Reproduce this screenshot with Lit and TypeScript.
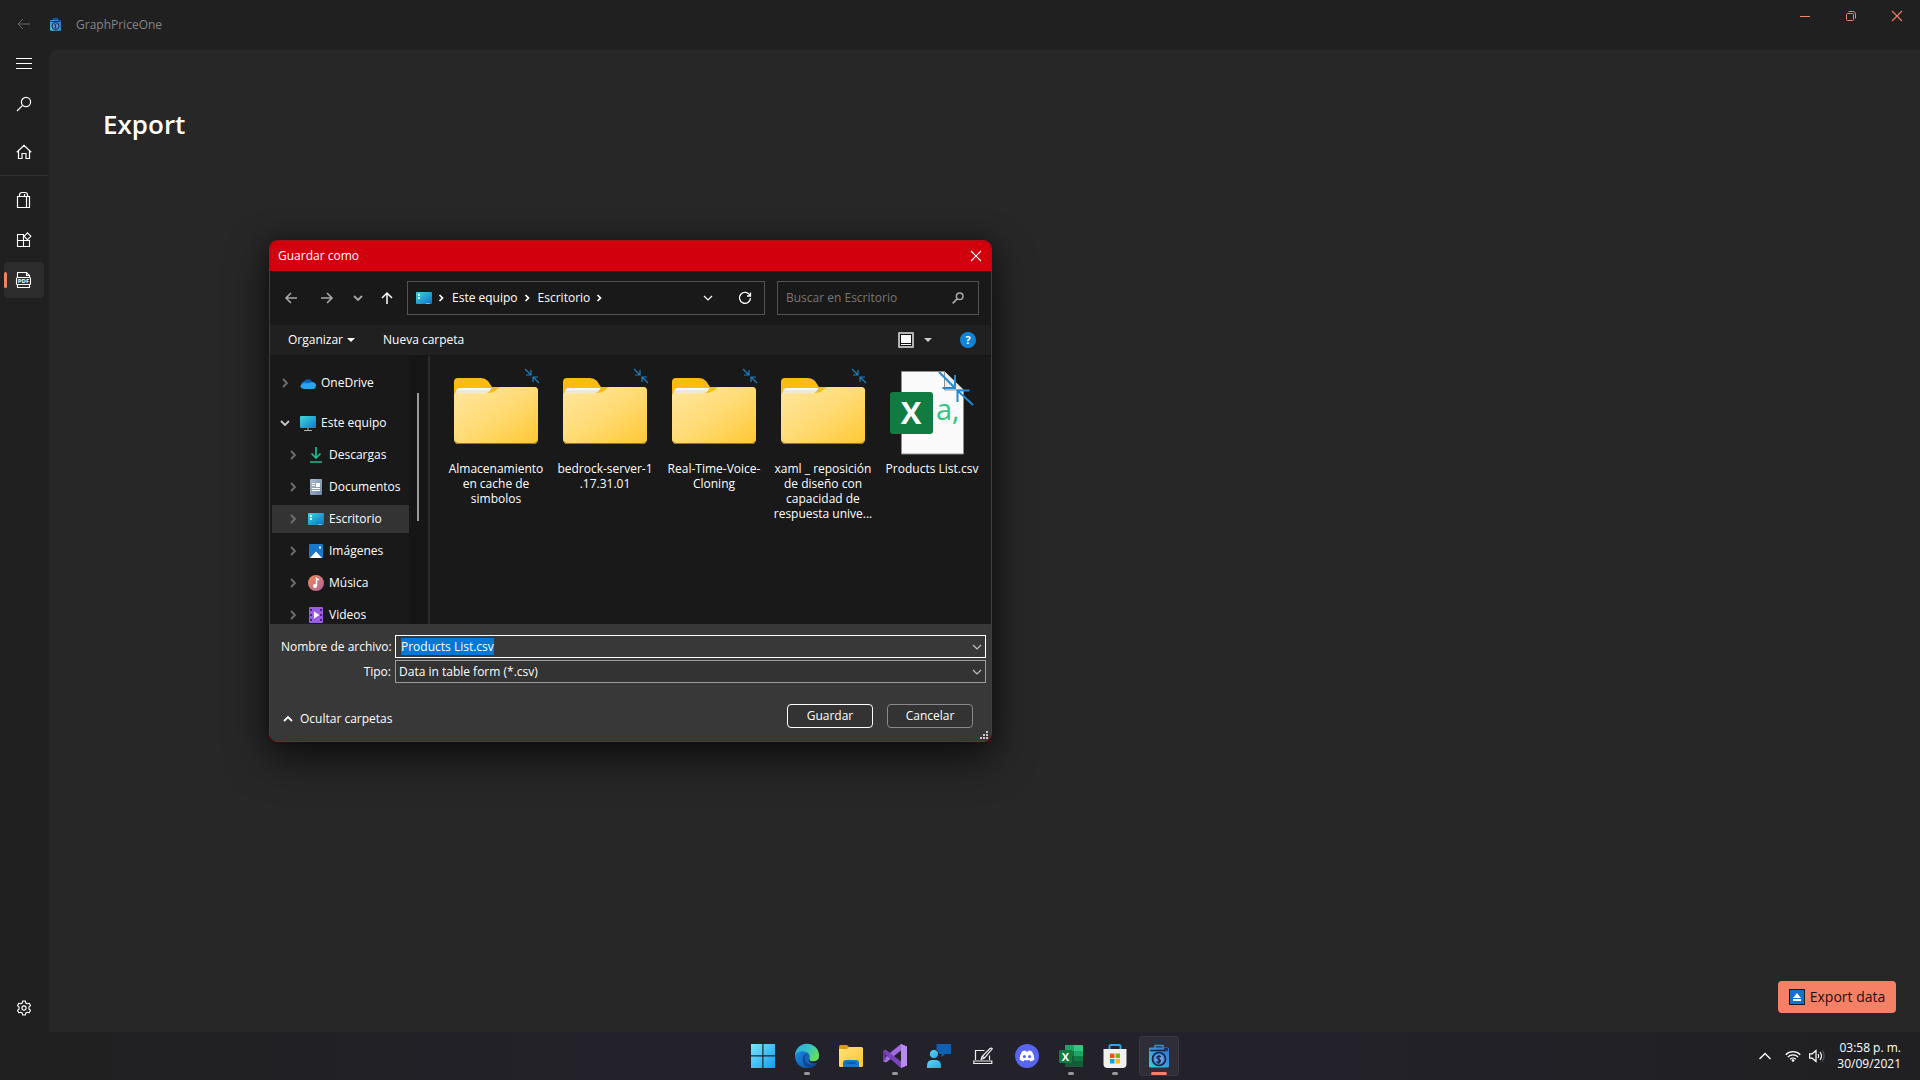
import { LitElement, html, css, svg, nothing, TemplateResult, SVGTemplateResult } from "lit";
import { customElement, state, query } from "lit/decorators.js";
import { classMap } from "lit/directives/class-map.js";

const icon = (w: number, h: number, body: SVGTemplateResult, cls = "") =>
  html`<svg class=${"glyph " + cls} width=${w} height=${h} viewBox="0 0 ${w} ${h}" aria-hidden="true">${body}</svg>`;

const chevron = {
  right: () => icon(6, 10, svg`<path d="M1 1l4 4-4 4" stroke-width="1.800"/>`),
  crumb: () => icon(6, 10, svg`<path d="M1.500 2l3 3-3 3" stroke-width="1.700"/>`),
  down: () => icon(10, 6, svg`<path d="M1 1l4 4 4-4" stroke-width="1.800"/>`),
  thinDown: () => icon(10, 6, svg`<path d="M1 1l4 4 4-4" stroke-width="1.200"/>`),
  up: () => icon(10, 6, svg`<path d="M1 5l4-4 4 4" stroke-width="1.800"/>`),
  trayUp: () => icon(14, 8, svg`<path d="M1.500 7L7 1.500 12.500 7" stroke-width="1.400"/>`),
};
const caret = () => icon(8, 4, svg`<path class="solid" d="M0 0h8L4 4z"/>`);

const glyphs = {
  back: () => icon(14, 12, svg`<path d="M6 1L1 6l5 5M1 6h12" stroke-width="1"/>`),
  menu: () => icon(16, 12, svg`<path d="M0 1.500h16M0 6.500h16M0 11.500h16" stroke-width="1"/>`),
  search: () => icon(16, 16, svg`<circle cx="10" cy="6" r="4.600" stroke-width="1.200"/><path d="M6.600 9.400L1 15" stroke-width="1.200"/>`),
  home: () => icon(16, 16, svg`<path d="M.800 8.300L8 1.300l7.200 7M2.500 7v7.500h3.500V9.500h4v5h3.500V7" stroke-width="1.200"/>`),
  bag: () => icon(16, 18, svg`<path d="M1.500 5.500h12v11h-12zM10.500 5.500v11M3.500 5.500V4q0-2.500 2.500-2.500h3q2.500 0 2.500 2.500v1.500M8.500 5.500V3" stroke-width="1.200"/>`),
  apps: () => icon(16, 16, svg`<path d="M8 2.500H1.500v12h12V8M1.500 8.500h12M7.500 2.500v12M11.500.900l3.400 3.400-3.400 3.400L8.100 4.300z" stroke-width="1.100"/>`),
  pdf: () => icon(16, 18, svg`<path d="M1.500 6V1.500h9l3 3V6M10.500 1.500v3h3M1.500 13v3.500h12V13" stroke-width="1.100"/><rect x=".500" y="6.500" width="14" height="7" rx="1" stroke-width="1.100"/><text class="pdf-text" x="7.500" y="12" text-anchor="middle">PDF</text>`),
  gear: () => icon(16, 16, svg`<circle cx="8" cy="8" r="2.100" stroke-width="1.100"/><path d="M6.700 1h2.600l.500 2 1.400.800 2-.600 1.300 2.300-1.500 1.400v2.200l1.500 1.400-1.300 2.300-2-.600-1.400.800-.500 2H6.700l-.500-2-1.400-.800-2 .600-1.300-2.300L3 9.100V6.900L1.500 5.500l1.300-2.300 2 .600L6.200 3z" stroke-width="1.100" stroke-linejoin="round"/>`),
  minimize: () => icon(10, 10, svg`<path d="M0 5.500h10" shape-rendering="crispEdges"/>`),
  restore: () => icon(10, 10, svg`<rect x=".500" y="2.500" width="7" height="7" rx="1"/><path d="M2.500.500H7q2.500 0 2.500 2.500v4.500"/>`),
  close: () => icon(10, 10, svg`<path d="M0 0l10 10M10 0L0 10" stroke-width="1.100"/>`),
  navBack: () => icon(12, 12, svg`<path d="M6 1L1 6l5 5M1 6h11" stroke-width="1.600"/>`),
  navForward: () => icon(12, 12, svg`<path d="M6 1l5 5-5 5M11 6H0" stroke-width="1.600"/>`),
  navUp: () => icon(12, 12, svg`<path d="M1 6l5-5 5 5M6 1v11" stroke-width="1.500"/>`),
  refresh: () => icon(14, 14, svg`<path d="M12 4.500A5.500 5.500 0 1 0 12.500 7M12.500 1.500v3.500H9" stroke-width="1.300"/>`),
  find: () => icon(12, 12, svg`<circle cx="7.700" cy="4.300" r="3.300" stroke-width="1.500"/><path d="M5.300 6.700L.700 11.300" stroke-width="1.800"/>`),
  view: () => icon(16, 16, svg`<rect x="0" y="0" width="16" height="16" rx="1" fill="#b4b4b4" stroke="none"/><rect x="2" y="2" width="12" height="12" fill="#111" stroke="none"/><rect x="3" y="3" width="10" height="8" fill="#fff" stroke="none"/><path d="M3 12.500h10" stroke="#fff"/>`),
  help: () => html`<span class="help">?</span>`,
  shrink: () => icon(16, 16, svg`<path d="M1 1l5.500 5.500M7 2v5H2M15 15L9.500 9.500M9 14V9h5" stroke="#1d7fc4" stroke-width="1.200"/>`),
  grip: () => icon(8, 8, svg`<path class="solid" d="M6 0h2v2H6zM6 3h2v2H6zM6 6h2v2H6zM3 3h2v2H3zM3 6h2v2H3zM0 6h2v2H0z"/>`),
  eject: () => icon(16, 16, svg`<rect x=".500" y=".500" width="15" height="15" fill="#0c74cf" stroke="#1a1a1a"/><path d="M8 4l4 5H4zM4 10h8v2H4z" fill="#fff" stroke="none"/>`),
  wifi: () => icon(16, 12, svg`<path d="M.700 4.700a10.300 10.300 0 0 1 14.600 0M2.900 7a7.200 7.200 0 0 1 10.200 0M5.200 9.200a4 4 0 0 1 5.600 0" stroke-width="1.300"/><circle class="solid" cx="8" cy="10.500" r="1.300"/>`),
  volume: () => icon(16, 14, svg`<path d="M.600 4.800h2.600L7 1.500v11L3.200 9.200H.600z" stroke-width="1.200"/><path d="M9 5q1.400 2 0 4M11 3q3 4 0 8" stroke-width="1.200"/><path d="M13.200 1.500q4 5.500 0 11" stroke="#666"/>`),
};

const appLogo = (size: number) => html`<svg class="glyph" width=${size} height=${size} viewBox="0 0 24 24" aria-hidden="true">
  <defs><linearGradient id="al" x1="0" y1="1" x2="1" y2="0"><stop offset="0" stop-color="#35d0dc"/><stop offset=".5" stop-color="#369be0"/><stop offset="1" stop-color="#3f6fc8"/></linearGradient></defs>
  <path d="M8 4V1.500h8V4" fill="none" stroke="#2f8fd0" stroke-width="1.500"/>
  <rect x="2" y="3.500" width="20" height="20" rx="1.500" fill="url(#al)" stroke="none"/>
  <path d="M3 6.500h14" stroke="#13233f" stroke-width="1.500"/><path d="M17 4v4l4-1.500V4z" fill="#1c3460" stroke="none"/>
  <circle cx="12" cy="15" r="6.500" fill="#4a90e0" stroke="#12233f" stroke-width="1.700"/>
  <circle cx="12" cy="15" r="4" fill="#6b9ae8" stroke="none"/>
  <path d="M14 12.800q-2-1.300-3.500-.300t.3 2.200 2.500 1.500-.8 2.200T9.800 17M12 11v8" fill="none" stroke="#12233f" stroke-width="1.200"/>
</svg>`;

const desktopIcon = () => icon(16, 12, svg`<defs><linearGradient id="dk" x2="1" y2="1"><stop stop-color="#3bd5de"/><stop offset="1" stop-color="#0e6fc6"/></linearGradient></defs><rect width="16" height="12" rx="1" fill="url(#dk)" stroke="none"/><path d="M2 2h2v2H2zM2 5h2v2H2z" fill="#e8fbff" stroke="none"/><path d="M10.500 11.500h1M12.500 11.500h1" stroke="#cfeeff"/>`);

const placeIcons: Record<string, () => TemplateResult> = {
  onedrive: () => icon(16, 11, svg`<path d="M3.500 5A4.800 4.800 0 0 1 12.500 4L9 8z" fill="#0f5fb8" stroke="none"/><path d="M4 10.500A3.500 3.500 0 0 1 3.500 3.800Q6 3.500 8 5.500l2 4z" fill="#1482d8" stroke="none"/><path d="M3 10.700Q.500 10 .200 8q2-3.500 6-2.500l6.500-1.500Q16 4.500 16 7.500 15.800 10.700 13 11H4z" fill="#2aa4ee" stroke="none"/>`),
  pc: () => icon(16, 16, svg`<defs><linearGradient id="pc" x2="1" y2="1"><stop stop-color="#3bd9dd"/><stop offset="1" stop-color="#1378cc"/></linearGradient></defs><rect y="1" width="16" height="12" rx="1" fill="url(#pc)" stroke="none"/><path d="M8 13v2.500M4 15.500h8" stroke="#aab2ba"/>`),
  downloads: () => icon(12, 16, svg`<path d="M6 0v11M1.500 6.500L6 11l4.500-4.500" stroke="#2bb592" stroke-width="1.700"/><path d="M0 15h12" stroke="#1f9e7d" stroke-width="1.800"/>`),
  documents: () => icon(12, 16, svg`<defs><linearGradient id="dc" x2="1" y2="1"><stop stop-color="#aebccc"/><stop offset="1" stop-color="#6f86a5"/></linearGradient></defs><rect width="12" height="16" rx="1" fill="url(#dc)" stroke="none"/><path d="M2 4.500h3M2 6.500h3M2 9.500h8M2 11.500h8" stroke="#fff"/><path d="M6 4h4v4H6z" fill="#fff" stroke="none"/>`),
  desktop: desktopIcon,
  pictures: () => icon(14, 14, svg`<rect width="14" height="14" rx="1" fill="#1878c9" stroke="none"/><path d="M1 14l6-6.500L13 14z" fill="#fff" stroke="none"/><path d="M10 2.500h2v2h-2z" fill="#fff" stroke="none"/>`),
  music: () => icon(16, 16, svg`<defs><linearGradient id="mu" x2="1" y2="1"><stop stop-color="#f08a55"/><stop offset="1" stop-color="#b0639e"/></linearGradient></defs><circle cx="8" cy="8" r="8" fill="url(#mu)" stroke="none"/><path d="M8.500 11V3.500L11 5" stroke="#fff" stroke-width="1.400"/><circle cx="7" cy="11" r="2" fill="#fff" stroke="none"/>`),
  videos: () => icon(14, 16, svg`<rect width="14" height="16" rx="1" fill="#9a5fe0" stroke="none"/><path d="M2 2v12M12 2v12" stroke="#4a2380" stroke-width="2" stroke-dasharray="2 3"/><path d="M5 4.500L10.500 8 5 11.500z" fill="#fff" stroke="none"/>`),
};

const folderArt = () => html`<svg class="art" width="84" height="66" viewBox="0 0 84 66" aria-hidden="true">
  <defs>
    <linearGradient id="ff" x1="0" y1="0" x2="1" y2="1"><stop stop-color="#ffe79f"/><stop offset=".5" stop-color="#ffdb74"/><stop offset="1" stop-color="#ffc832"/></linearGradient>
    <linearGradient id="fw" x1="0" y1="0" x2="0" y2="1"><stop stop-color="#fff"/><stop offset=".6" stop-color="#e6e4e0"/><stop offset="1" stop-color="#fff0c0"/></linearGradient>
  </defs>
  <path d="M0 20V4q0-4 4-4h23q4 0 7 3l4 6h42q4 0 4 4v10H0z" fill="#fdba12"/>
  <path d="M0 18q0-3 2-3h32q5 0 8-3 3-3 5-3h33q4 0 4 4v48q0 5-5 5H5q-5 0-5-5z" fill="url(#ff)"/>
  <path d="M1.500 16q0-6 4-6h32q-2 5-7 5.500H4q-2 0-2.500.500z" fill="url(#fw)"/>
  <path d="M1 63.500q1.500 2 4 2h74q2.500 0 4-2" fill="none" stroke="#9c7420"/>
</svg>`;

const csvArt = () => html`<svg class="art" width="84" height="86" viewBox="0 0 84 86" aria-hidden="true">
  <path d="M11.500 1.500h43L73.500 20v64H11.500z" fill="#fafafa" stroke="#8d8d8d"/>
  <path d="M54.500 1.500V20h19" fill="#ececec" stroke="#8d8d8d"/>
  <rect x="0" y="22" width="43" height="42" rx="3" fill="#107c41"/>
  <text class="csv-x" x="21" y="54" text-anchor="middle">X</text>
  <text class="csv-a" x="46" y="50">a,</text>
  <path d="M49 2l16 16M65 5v13H52.500M83 35L68 21M67.500 32V20.500h12" fill="none" stroke="#2088d4" stroke-width="2"/>
</svg>`;

const taskIcons: Record<string, () => TemplateResult> = {
  start: () => icon(24, 24, svg`<defs><linearGradient id="st" gradientUnits="userSpaceOnUse" x2="24" y2="24"><stop stop-color="#7be6ff"/><stop offset="1" stop-color="#109df0"/></linearGradient></defs><path d="M0 0h11.300v11.300H0zM12.500 0H24v11.300H12.500zM0 12.500h11.300V24H0zM12.500 12.500H24V24H12.500z" fill="url(#st)" stroke="none"/>`),
  edge: () => icon(24, 24, svg`<defs><linearGradient id="e1" x2="1" y2=".500"><stop stop-color="#2fa8e8"/><stop offset=".55" stop-color="#35c3c4"/><stop offset="1" stop-color="#64de58"/></linearGradient><linearGradient id="e2" x2="1" y2="1"><stop stop-color="#1b8de0"/><stop offset="1" stop-color="#0f50a8"/></linearGradient></defs>
    <circle cx="12" cy="12" r="12" fill="#1465b8" stroke="none"/>
    <path d="M0 12A12 12 0 0 1 24 11.500Q24 17.500 18 17.500 13.500 17.500 14.500 14.500 15.500 12 13.500 9.500 11 7 7 7.500 2 8 0 12z" fill="url(#e1)" stroke="none"/>
    <path d="M0 12Q2 7.500 7 7.500q4 0 6.500 2.300Q9 9.500 8.300 14 8 19.500 14 23.800 2 25 0 12z" fill="url(#e2)" stroke="none"/>
    <path d="M13.500 9.800Q9.500 10.500 9.500 14.500 10 20.500 17 20.500q3 0 5.500-2-3 5.500-9 5.500Q7 20 7.800 14 9 9 13.500 9.800z" fill="#0d4590" stroke="none"/>
    <path d="M14.500 14.500q-.800 3 3.500 3 3 0 5-2l.800 1q-1.300 2.500-4 3-5 .500-6.300-3z" fill="#23222b" stroke="none"/>`),
  explorer: () => icon(24, 22, svg`<defs><linearGradient id="ex" x2="1" y2="1"><stop stop-color="#ffe07a"/><stop offset="1" stop-color="#ffc52c"/></linearGradient></defs><path d="M0 5V1.500Q0 0 1.500 0H8l2.500 2.500V5z" fill="#dc9a12" stroke="none"/><path d="M0 4h8l2-2h12.500Q24 2 24 3.500v17q0 1.500-1.500 1.500h-21Q0 22 0 20.500z" fill="url(#ex)" stroke="none"/><path d="M4 22v-4q0-3 3-3h10q3 0 3 3v4z" fill="#1377cb" stroke="none"/><path d="M7.500 18h9" stroke="#0b559e" stroke-width="1.500"/>`),
  studio: () => icon(24, 24, svg`<path d="M18 0l6 2.500v19L18 24 4 11z" fill="#8a4fc9" stroke="none"/><path d="M18 0v6.500L4.500 17.500 2.500 18.500 0 17v-1.500L18 0z" fill="#a26be0" stroke="none"/><path d="M0 7l2.500-1.500L18 17.500V24L0 8.500z" fill="#7b42bd" stroke="none"/><path d="M0 7l2.500 1.500v7L0 17z" fill="#6a35a8" stroke="none"/><path d="M18 6.500v11L11 12z" fill="#23222b" stroke="none"/><path d="M18 0l6 2.500v19L18 24z" fill="#b98af0" stroke="none"/>`),
  people: () => icon(24, 24, svg`<defs><linearGradient id="pe" x2="1" y2="1"><stop stop-color="#5fd7f5"/><stop offset="1" stop-color="#2ba6e0"/></linearGradient></defs><path d="M9.500 0H24v10h-6l-3.500 3V10h-5z" fill="#0f5fb4" stroke="none"/><circle cx="7" cy="10" r="4.600" fill="url(#pe)" stroke="#23222b"/><path d="M0 24v-2q0-6 5-6h4q5 0 5 6v2z" fill="url(#pe)" stroke="none"/>`),
  laptop: () => icon(20, 18, svg`<path d="M2.500 13V3.500h9M16.500 8.500V13M.800 14h18v2.500h-18zM8 13l1-3.500L17 1.500q1.500-1 2.300.300L11.500 11 8 12.500M9.500 9.500l2 1.500" stroke="#eee" stroke-width="1.200"/>`),
  discord: () => icon(24, 24, svg`<circle cx="12" cy="12" r="12" fill="#5865f2" stroke="none"/><path d="M7 7.500Q9 6.600 10.400 6.500l.500.900h2.200l.500-.900q1.400.100 3.400 1 2.500 4 2.300 8.300Q17.500 17 15.500 17.500l-1-1.500q-2.500.600-5 0l-1 1.500q-2-.500-3.800-1.700Q4.500 11.500 7 7.500z" fill="#fff" stroke="none"/><ellipse cx="9.400" cy="12.600" rx="1.500" ry="1.700" fill="#5865f2" stroke="none"/><ellipse cx="14.600" cy="12.600" rx="1.500" ry="1.700" fill="#5865f2" stroke="none"/>`),
  excel: () => icon(24, 22, svg`<rect x="6" width="18" height="22" rx="1" fill="#185c37" stroke="none"/><path d="M6 0h9v6H6z" fill="#21a366" stroke="none"/><path d="M15 0h8q1 0 1 1v5h-9z" fill="#33c481" stroke="none"/><path d="M6 6h9v5H6z" fill="#107c41" stroke="none"/><path d="M15 6h9v5h-9z" fill="#21a366" stroke="none"/><path d="M15 11h9v5h-9z" fill="#107c41" stroke="none"/><rect y="5" width="13" height="13" rx="1" fill="#107c41" stroke="none"/><text class="xl-x" x="6.500" y="16" text-anchor="middle">X</text>`),
  store: () => icon(24, 24, svg`<path d="M6.500 6V2.500Q6.500 1 8 1h8q1.500 0 1.500 1.500V6" stroke="#2aa8e8" stroke-width="2"/><path d="M.500 5h23v15q0 4-4 4h-15q-4 0-4-4z" fill="#f1f1f1" stroke="none"/><path d="M7 9.500h4.500V14H7z" fill="#f25022" stroke="none"/><path d="M12.500 9.500H17V14h-4.500z" fill="#7fba00" stroke="none"/><path d="M7 15h4.500v4.500H7z" fill="#00a4ef" stroke="none"/><path d="M12.500 15H17v4.500h-4.500z" fill="#ffb900" stroke="none"/>`),
  app: () => appLogo(24),
};

const shared = css`
  * { box-sizing: border-box; }
  :host { font-family: "Open Sans", "Noto Sans", sans-serif; font-size: 12px; line-height: 16px; color: #fff; }
  button, input, select { font: inherit; color: inherit; margin: 0; padding: 0; border: 0; background: none; border-radius: 0; outline: none; }
  button { display: flex; align-items: center; justify-content: center; white-space: nowrap; }
  .glyph { display: block; flex: none; fill: none; stroke: currentColor; overflow: visible; }
  .glyph .solid { fill: currentColor; stroke: none; }
  .grow { flex: 1; }
`;

interface Place { name: string; icon: string; level: number; open?: boolean; }
interface Entry { lines: string[]; kind: "folder" | "csv"; }

@customElement("save-dialog")
class SaveDialog extends LitElement {
  @state() private places: Place[] = [
    { name: "OneDrive", icon: "onedrive", level: 0 },
    { name: "Este equipo", icon: "pc", level: 0, open: true },
    { name: "Descargas", icon: "downloads", level: 1 },
    { name: "Documentos", icon: "documents", level: 1 },
    { name: "Escritorio", icon: "desktop", level: 1 },
    { name: "Imágenes", icon: "pictures", level: 1 },
    { name: "Música", icon: "music", level: 1 },
    { name: "Videos", icon: "videos", level: 1 },
  ];
  @state() private current = "Escritorio";
  private entries: Entry[] = [
    { kind: "folder", lines: ["Almacenamiento", "en cache de", "simbolos"] },
    { kind: "folder", lines: ["bedrock-server-1", ".17.31.01"] },
    { kind: "folder", lines: ["Real-Time-Voice-", "Cloning"] },
    { kind: "folder", lines: ["xaml _ reposición", "de diseño con", "capacidad de", "respuesta unive..."] },
    { kind: "csv", lines: ["Products List.csv"] },
  ];
  @query("#file-name") private fileName!: HTMLInputElement;

  static styles = [shared, css`
    :host { display: flex; flex-direction: column; background: #191919; border: 1px solid #a3121b; border-radius: 8px; overflow: hidden; box-shadow: 0 16px 40px rgba(0, 0, 0, .6), 0 0 20px rgba(0, 0, 0, .3); }
    .title { display: flex; align-items: center; justify-content: space-between; height: 30px; padding: 0 10px 0 8px; background: #d1000c; }
    .title h2 { margin: 0; font-size: 12px; font-weight: 400; }
    .nav { display: flex; align-items: center; height: 54px; padding: 0 12px 0 15px; }
    .nav .arrows { display: flex; align-items: center; gap: 20px; width: 122px; color: #a8a8a8; }
    .nav .arrows .up { color: #fff; }
    .nav .forward { margin-left: 4px; }
    .nav .recent { margin-right: -2px; }
    .address { flex: 1; display: flex; align-items: center; height: 34px; padding: 0 12px 0 8px; border: 1px solid #535353; }
    .crumbs { display: flex; align-items: center; gap: 8px; margin: 0; padding: 0; list-style: none; flex: 1; }
    .crumbs li { display: flex; align-items: center; gap: 6px; }
    .address .reload { margin-left: 25px; }
    .search { display: flex; align-items: center; width: 202px; height: 34px; margin-left: 12px; padding: 0 14px 0 8px; border: 1px solid #535353; color: #a8a8a8; }
    .search input { flex: 1; min-width: 0; }
    .search input::placeholder { color: #777; opacity: 1; }
    .tools { display: flex; align-items: center; height: 31px; padding: 0 15px 0 18px; background: #202020; gap: 28px; border-bottom: 1px solid #161616; }
    .tools button { gap: 4px; }
    .tools .view { gap: 10px; color: #ccc; }
    .help { display: flex; align-items: center; justify-content: center; width: 16px; height: 16px; border-radius: 8px; background: #1084d9; font-size: 11px; font-weight: 700; line-height: 16px; }
    .body { display: flex; height: 268px; overflow: hidden; }
    .tree { width: 137px; flex: none; margin: 0 0 0 2px; padding: 13px 0 0; list-style: none; }
    .tree button { width: 100%; height: 28px; margin-bottom: 4px; padding-left: 8px; justify-content: flex-start; color: #fff; }
    .tree .root { margin-bottom: 12px; }
    .tree .root.open { margin-bottom: 4px; }
    .tree .child { padding-left: 16px; }
    .tree .current { background: #333; }
    .tree .toggle { display: flex; justify-content: center; width: 10px; margin-right: 10px; color: #707070; }
    .tree .open .toggle { color: #c8c8c8; }
    .tree .pic { display: flex; justify-content: center; width: 16px; margin-right: 5px; }
    .scroll { width: 19px; flex: none; padding: 37px 9px 0 8px; background: #161616; }
    .thumb { width: 2px; height: 128px; background: #9a9a9a; }
    .split { width: 2px; flex: none; background: #2b2b2b; }
    .files { flex: 1; display: flex; gap: 1px; margin: 0; padding: 10px 0 0 12px; list-style: none; }
    .files li { width: 108px; flex: none; }
    .files button { position: relative; width: 100%; flex-direction: column; justify-content: flex-start; line-height: 15px; }
    .thumbnail { display: flex; justify-content: center; height: 88px; margin-bottom: 7px; padding-top: 12px; }
    .csv .thumbnail { padding-top: 4px; }
    .art { display: block; flex: none; overflow: visible; }
    .mark { position: absolute; top: 2px; right: 10px; }
    .csv-x { font: 700 31px "Open Sans", sans-serif; fill: #fff; }
    .csv-a { font: 400 29px "Open Sans", sans-serif; fill: #33c481; }
    .foot { padding: 11px 5px 0 11px; background: #383838; height: 117px; }
    .fields { display: grid; grid-template-columns: 110px 1fr; column-gap: 4px; row-gap: 2px; align-items: center; }
    .fields label { text-align: right; white-space: nowrap; }
    .box { display: grid; height: 23px; align-items: center; }
    .box > * { grid-area: 1 / 1; }
    .box .glyph { justify-self: end; margin-right: 4px; color: #c0c0c0; pointer-events: none; }
    .box input, .box select { width: 100%; height: 23px; border: 1px solid #9a9f9a; background: #333; appearance: none; }
    .box input { border-color: #fff; background: #383838; padding: 0 20px 0 5px; }
    .box select { padding: 0 20px 0 3px; }
    .box input::selection { background: #0078d7; color: #fff; }
    .actions { display: flex; align-items: center; gap: 14px; padding: 21px 13px 0 2px; }
    .actions .hide { flex: 1; justify-content: flex-start; gap: 7px; padding-top: 6px; color: #fff; }
    .actions .cmd { width: 86px; height: 24px; border: 1px solid #8a8a8a; border-radius: 4px; background: #333; }
    .actions .main { border-color: #fff; }
    .grip { position: absolute; right: 3px; bottom: 2px; color: #c8c8c8; }
  `];

  firstUpdated() {
    this.fileName.focus();
    this.fileName.select();
  }

  render() {
    return html`
      <header class="title"><h2>Guardar como</h2><button aria-label="Cerrar">${glyphs.close()}</button></header>
      <nav class="nav">
        <div class="arrows">
          <button aria-label="Atrás">${glyphs.navBack()}</button>
          <button class="forward" aria-label="Adelante">${glyphs.navForward()}</button>
          <button class="recent" aria-label="Recientes">${chevron.down()}</button>
          <button class="up" aria-label="Subir">${glyphs.navUp()}</button>
        </div>
        <div class="address">
          <ol class="crumbs">
            <li>${desktopIcon()}${chevron.crumb()}</li>
            <li><button>Este equipo</button>${chevron.crumb()}</li>
            <li><button>Escritorio</button>${chevron.crumb()}</li>
          </ol>
          <button aria-label="Ubicaciones anteriores">${chevron.thinDown()}</button>
          <button class="reload" aria-label="Actualizar">${glyphs.refresh()}</button>
        </div>
        <div class="search">
          <input type="text" aria-label="Buscar en Escritorio" placeholder="Buscar en Escritorio" />
          ${glyphs.find()}
        </div>
      </nav>
      <div class="tools">
        <button>Organizar ${caret()}</button>
        <button>Nueva carpeta</button>
        <span class="grow"></span>
        <button class="view" aria-label="Cambiar la vista">${glyphs.view()}${caret()}</button>
        <button aria-label="Ayuda">${glyphs.help()}</button>
      </div>
      <div class="body">
        <ul class="tree">
          ${this.places.map((p) => html`<li><button
            class=${classMap({ root: p.level === 0, child: p.level === 1, open: !!p.open, current: p.name === this.current })}
            @click=${() => (this.current = p.name)}>
            <span class="toggle">${p.open ? chevron.down() : chevron.right()}</span>
            <span class="pic">${placeIcons[p.icon]()}</span>${p.name}</button></li>`)}
        </ul>
        <div class="scroll"><div class="thumb"></div></div>
        <div class="split"></div>
        <ul class="files">
          ${this.entries.map((e) => html`<li class=${e.kind}><button>
            <span class="thumbnail">${e.kind === "folder" ? folderArt() : csvArt()}</span>
            ${e.kind === "folder" ? html`<span class="mark">${glyphs.shrink()}</span>` : nothing}
            ${e.lines.map((l) => html`<span>${l}</span>`)}
          </button></li>`)}
        </ul>
      </div>
      <footer class="foot">
        <div class="fields">
          <label for="file-name">Nombre de archivo:</label>
          <div class="box"><input id="file-name" type="text" .value=${"Products List.csv"} />${chevron.thinDown()}</div>
          <label for="file-type">Tipo:</label>
          <div class="box"><select id="file-type"><option>Data in table form (*.csv)</option></select>${chevron.thinDown()}</div>
        </div>
        <div class="actions">
          <button class="hide">${chevron.up()} Ocultar carpetas</button>
          <button class="cmd main">Guardar</button>
          <button class="cmd">Cancelar</button>
        </div>
        <span class="grip">${glyphs.grip()}</span>
      </footer>`;
  }
}

@customElement("task-bar")
class TaskBar extends LitElement {
  private apps = [
    { id: "start", label: "Inicio" },
    { id: "edge", label: "Microsoft Edge", running: true },
    { id: "explorer", label: "Explorador" },
    { id: "studio", label: "Visual Studio", running: true },
    { id: "people", label: "Contactos" },
    { id: "laptop", label: "Pizarra" },
    { id: "discord", label: "Discord" },
    { id: "excel", label: "Excel", running: true },
    { id: "store", label: "Microsoft Store", running: true },
    { id: "app", label: "GraphPriceOne", active: true },
  ];

  static styles = [shared, css`
    :host { display: grid; grid-template-columns: 1fr auto 1fr; align-items: center; height: 48px; background: linear-gradient(90deg, #202020, #23222b 35%, #23222b 65%, #202022); }
    .apps { grid-column: 2; display: flex; gap: 4px; padding-left: 1px; }
    .apps button { position: relative; width: 40px; height: 40px; border-radius: 4px; }
    .apps .active { background: #2f2e37; box-shadow: inset 0 0 0 1px #383740; }
    .dot { position: absolute; left: 17px; bottom: 1px; width: 6px; height: 3px; border-radius: 2px; background: #9a9a9e; }
    .active .dot { left: 12px; width: 16px; background: #f08266; }
    .xl-x { font: 700 11px "Open Sans", sans-serif; fill: #fff; stroke: none; }
    .tray { display: flex; align-items: center; justify-content: flex-end; gap: 8px; padding-right: 19px; }
    .tray .more { margin-right: 5px; }
    .clock { display: block; text-align: right; margin-left: 4px; }
    .clock span { display: block; }
  `];

  render() {
    return html`
      <nav class="apps">
        ${this.apps.map((a) => html`<button class=${classMap({ active: !!a.active })} aria-label=${a.label}>
          ${taskIcons[a.id]()}${a.running || a.active ? html`<span class="dot"></span>` : nothing}</button>`)}
      </nav>
      <div class="tray">
        <button class="more" aria-label="Iconos ocultos">${chevron.trayUp()}</button>
        <button aria-label="Red">${glyphs.wifi()}</button>
        <button aria-label="Volumen">${glyphs.volume()}</button>
        <button class="clock"><span>03:58 p. m.</span><span>30/09/2021</span></button>
      </div>`;
  }
}

@customElement("app-root")
class AppRoot extends LitElement {
  @state() private page = "pdf";

  static styles = [shared, css`
    :host { position: relative; display: grid; grid-template: 49px 1fr 48px / 49px 1fr; min-height: 100vh; background: #202020; }
    .bar { grid-column: 1 / 3; display: flex; align-items: flex-start; }
    .bar .back { width: 48px; height: 48px; color: #686868; }
    .bar .name { display: flex; align-items: center; gap: 14px; height: 49px; padding-left: 1px; color: #848484; }
    .bar .wins { display: flex; color: #f08266; }
    .bar .wins button { width: 46px; height: 32px; }
    .rail { display: flex; flex-direction: column; align-items: center; padding: 0 5px 2px 4px; }
    .rail button { position: relative; width: 40px; height: 36px; margin-bottom: 4px; border-radius: 4px; }
    .rail .menu { margin-top: -4px; margin-bottom: 5px; }
    .rail .home { margin-top: 8px; }
    .rail hr { align-self: stretch; height: 1px; margin: 1px -4px 6px; border: 0; background: #333; }
    .rail .on { background: #2d2d2d; }
    .rail .on::before { content: ""; position: absolute; left: 0; top: 10px; width: 3px; height: 16px; border-radius: 2px; background: #f08266; }
    .pdf-text { font: 700 6px "Open Sans", sans-serif; fill: currentColor; stroke: none; }
    main { display: flex; flex-direction: column; justify-content: space-between; padding: 55px 24px 19px 53px; background: #272727; border: 1px solid #232323; border-width: 1px 0 0 1px; border-radius: 8px 0 0 0; }
    h1 { margin: 0; font-size: 26px; line-height: 38px; font-weight: 600; }
    .export { align-self: flex-end; gap: 5px; width: 118px; height: 32px; border-radius: 4px; background: #f58065; color: #1f100c; font-size: 14px; }
    task-bar { grid-column: 1 / 3; }
    save-dialog { position: absolute; left: 269px; top: 240px; width: 723px; }
  `];

  render() {
    const item = (id: string, label: string) => html`<button
      class=${classMap({ on: this.page === id, [id]: true })} aria-label=${label}
      @click=${() => (this.page = id)}>${(glyphs as Record<string, () => TemplateResult>)[id]()}</button>`;
    return html`
      <header class="bar">
        <button class="back" aria-label="Back">${glyphs.back()}</button>
        <div class="name">${appLogo(13)}<span>GraphPriceOne</span></div>
        <span class="grow"></span>
        <div class="wins">
          <button aria-label="Minimize">${glyphs.minimize()}</button>
          <button aria-label="Restore">${glyphs.restore()}</button>
          <button aria-label="Close">${glyphs.close()}</button>
        </div>
      </header>
      <nav class="rail">
        ${item("menu", "Menu")}
        ${item("search", "Search")}
        ${item("home", "Home")}
        <hr />
        ${item("bag", "Products")}
        ${item("apps", "Stores")}
        ${item("pdf", "Export")}
        <span class="grow"></span>
        ${item("gear", "Settings")}
      </nav>
      <main>
        <h1>Export</h1>
        <button class="export">${glyphs.eject()} Export data</button>
      </main>
      <task-bar></task-bar>
      <save-dialog></save-dialog>`;
  }
}
